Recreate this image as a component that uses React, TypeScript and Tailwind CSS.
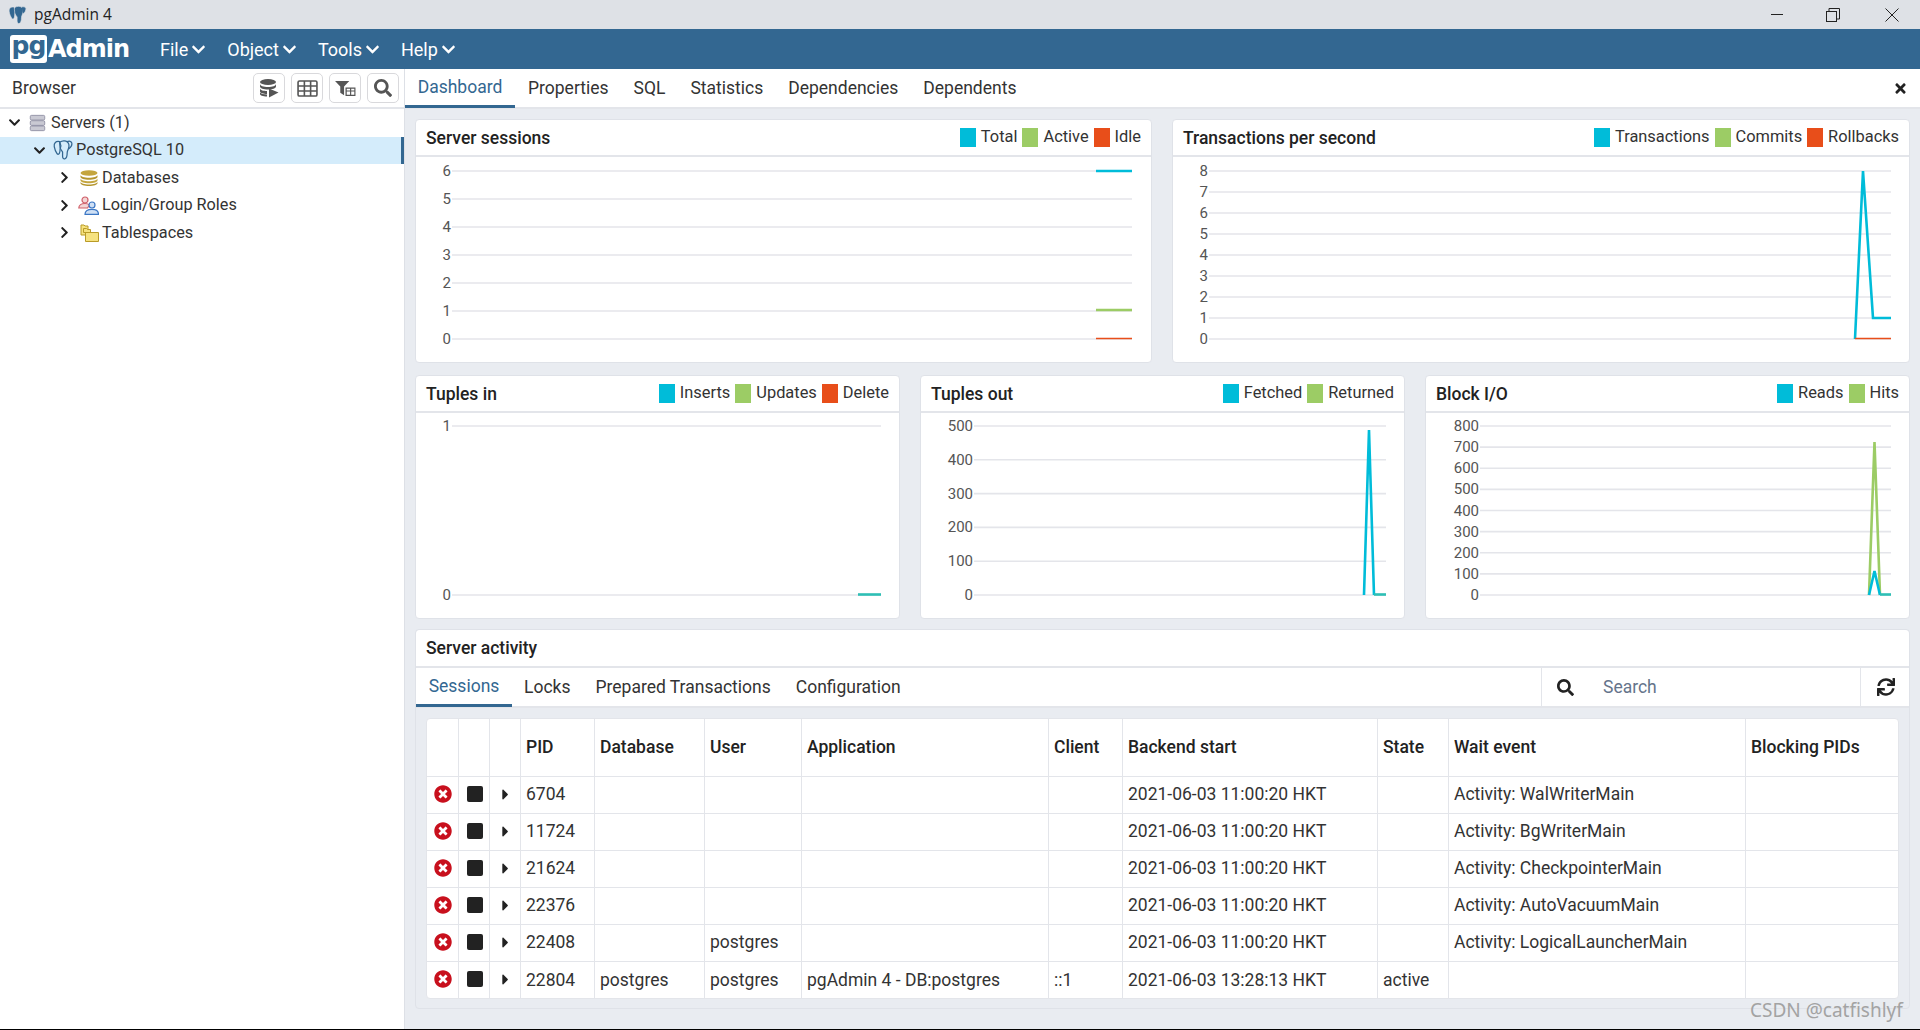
import React from "react";
import { FaCaretRight, FaChevronDown, FaChevronRight, FaSearch, FaSync, FaTimes, FaTimesCircle } from "react-icons/fa";

const CYAN = "#00bcd9";
const GREEN = "#9ccc65";
const ORANGE = "#e84e1a";

type Series = { color: string; points: string; thin?: boolean };

type ChartProps = {
  title: string;
  widthClass: string;
  legend: { label: string; color: string }[];
  labels: string[];
  top: number;
  bottom: number;
  x1: number;
  x2: number;
  labelX: number;
  series: Series[];
};

// chart values are px inside the card body
const Chart = ({ title, widthClass, legend, labels, top, bottom, x1, x2, labelX, series }: ChartProps) => {
  const step = labels.length > 1 ? (bottom - top) / (labels.length - 1) : 0;

  return (
    <div className={`${widthClass} h-[244px] bg-white rounded-[4px] border border-[#dfe2e8] flex flex-col`}>
      <div className="h-[37px] shrink-0 border-b-2 border-[#e3e5ea] flex items-center justify-between pl-[10px] pr-[10px]">
        <span className="text-[17.5px] font-medium text-[#222] pt-[1px]">{title}</span>
        <div className="flex items-center gap-[5px]">
          {legend.map((item) => (
            <div key={item.label} className="flex items-center gap-[5px]">
              <span className="w-[16px] h-[19px] inline-block" style={{ backgroundColor: item.color }} />
              <span className="text-[16.400px] text-[#333] font-normal">{item.label}</span>
            </div>
          ))}
        </div>
      </div>
      <svg className="flex-1 w-full block" fontFamily="Roboto, sans-serif">
        {labels.map((label, i) => {
          const y = top + step * i;
          return (
            <g key={label}>
              <line x1={x1} x2={x2} y1={y} y2={y} stroke="#e4e5ea" strokeWidth="1.6" />
              <text x={labelX} y={y + 5} fontSize="15" fill="#555" textAnchor="end">
                {label}
              </text>
            </g>
          );
        })}
        {series.map((s, i) => (
          <polyline key={i} points={s.points} fill="none" stroke={s.color} strokeWidth={s.thin ? "1.6" : "2.6"} />
        ))}
      </svg>
    </div>
  );
};

const Elephant = ({ className, color, filled }: { className: string; color: string; filled?: boolean }) => (
  <svg
    viewBox="0 0 24 24"
    className={className}
    fill={filled ? color : "none"}
    stroke={filled ? "#dee1e6" : color}
    strokeWidth={filled ? "0.8" : "1.5"}
    strokeLinejoin="round"
    strokeLinecap="round"
  >
    <path d="M8 2C3.500 1 .800 3.500 1.500 8c.5 3 2 6.500 3.500 8.500 1 1.200 2.200.6 2.800-1 .5-1.300.7-3 .7-4.500L9.500 7 8 2z" />
    <path d="M8.500 2.500c2.500-1.800 6.500-2 8.500-.5 2.200 1.700 2.500 5.500 1.500 8.500-.6 1.800-1.500 3-1.500 5 0 3-.5 6-2.500 7-2 .8-3-1-3-3v-5c-1-1.500-2.500-3-3-5.500-.3-2.500-.5-5-.5-6.500z" />
    <path d="M17 2c2.500-1 5-.5 5.500 1.500.5 2.500-1 5.500-3.500 7" />
  </svg>
);

const ServerStackIcon = () => (
  <svg viewBox="0 0 20 20" className="w-[17px] h-[20px] shrink-0">
    <rect x="1.500" y="1" width="17" height="5.500" rx="1.500" fill="#c9c9d3" stroke="#8b8ba0" />
    <rect x="1.500" y="7.300" width="17" height="5.500" rx="1.500" fill="#c9c9d3" stroke="#8b8ba0" />
    <rect x="1.500" y="13.500" width="17" height="5.500" rx="1.500" fill="#c9c9d3" stroke="#8b8ba0" />
  </svg>
);

const DatabasesIcon = () => (
  <svg viewBox="0 0 18 16" className="w-[18px] h-[16px] shrink-0">
    <ellipse cx="9" cy="3" rx="8.500" ry="2.800" fill="#c4a53e" />
    <path d="M.500 5c0 1.600 3.800 2.800 8.500 2.800s8.500-1.200 8.500-2.800v2c0 1.600-3.800 2.800-8.500 2.800S.500 8.600.500 7z" fill="#b5962f" />
    <path d="M.500 8.500c0 1.600 3.800 2.800 8.500 2.800s8.500-1.200 8.500-2.800v2c0 1.600-3.800 2.800-8.500 2.800S.500 12.100.500 10.500z" fill="#c4a53e" />
    <path d="M.500 11.800c0 1.600 3.800 2.800 8.500 2.800s8.500-1.200 8.500-2.800v1.400c0 1.600-3.800 2.800-8.500 2.800S.500 14.800.500 13.200z" fill="#b5962f" />
  </svg>
);

const RolesIcon = () => (
  <svg viewBox="0 0 21 19" className="w-[21px] h-[19px] shrink-0" fill="none" strokeWidth="1.200">
    <circle cx="7" cy="4" r="3" fill="#f3d5d5" stroke="#d0606a" />
    <path d="M.800 12c0-3 2.500-4.500 6.200-4.500 2 0 3.500.5 4.500 1.500l-2 3z" fill="#f3d5d5" stroke="#d0606a" />
    <circle cx="14" cy="9" r="3" fill="#cfe0f5" stroke="#3b76c4" />
    <path d="M7 18.300c0-3.500 3-5 7-5s6.500 1.500 6.500 5z" fill="#cfe0f5" stroke="#3b76c4" />
  </svg>
);

const TablespacesIcon = () => (
  <svg viewBox="0 0 19 19" className="w-[19px] h-[19px] shrink-0" strokeWidth="1" stroke="#b99b27">
    <path d="M1 2h3l1 1h3v9H1z" fill="#f6e27f" />
    <path d="M3.500 5.500h3l1 1h3v3h-7z" fill="#f6e27f" />
    <path d="M5.500 9.500h13v9h-13z" fill="#f6e27f" />
  </svg>
);

const ToolButton = ({ children }: { children: React.ReactNode }) => (
  <div className="w-[32px] h-[30px] rounded-[5px] border border-[#d9d9dc] flex items-center justify-center text-[#555]">{children}</div>
);

const TreeRow = ({
  pad,
  open,
  active,
  icon,
  label,
  gap,
  indent,
}: {
  pad: string;
  open: boolean;
  active?: boolean;
  icon: React.ReactNode;
  label: string;
  gap: string;
  indent: string;
}) => (
  <div className={`h-[27.500px] flex items-center ${pad} ${active ? "bg-[#d4ecfb] border-r-[3px] border-[#336791]" : ""}`}>
    <span className={`${indent} flex justify-start text-[#222] shrink-0`}>
      {open ? <FaChevronDown size={13} /> : <FaChevronRight size={13} />}
    </span>
    {icon}
    <span className={`${gap} text-[16.250px] text-[#333]`}>{label}</span>
  </div>
);

const sessions = [
  { pid: "6704", db: "", user: "", app: "", client: "", start: "2021-06-03 11:00:20 HKT", state: "", wait: "Activity: WalWriterMain" },
  { pid: "11724", db: "", user: "", app: "", client: "", start: "2021-06-03 11:00:20 HKT", state: "", wait: "Activity: BgWriterMain" },
  { pid: "21624", db: "", user: "", app: "", client: "", start: "2021-06-03 11:00:20 HKT", state: "", wait: "Activity: CheckpointerMain" },
  { pid: "22376", db: "", user: "", app: "", client: "", start: "2021-06-03 11:00:20 HKT", state: "", wait: "Activity: AutoVacuumMain" },
  { pid: "22408", db: "", user: "postgres", app: "", client: "", start: "2021-06-03 11:00:20 HKT", state: "", wait: "Activity: LogicalLauncherMain" },
  { pid: "22804", db: "postgres", user: "postgres", app: "pgAdmin 4 - DB:postgres", client: "::1", start: "2021-06-03 13:28:13 HKT", state: "active", wait: "" },
];

const headers = ["", "", "", "PID", "Database", "User", "Application", "Client", "Backend start", "State", "Wait event", "Blocking PIDs"];
const colWidths = ["w-[31px]", "w-[31px]", "w-[31px]", "w-[74px]", "w-[110px]", "w-[97px]", "w-[247px]", "w-[74px]", "w-[255px]", "w-[71px]", "w-[297px]", "w-[153px]"];

const App = () => {
  return (
    <div className="relative h-screen w-full flex flex-col overflow-hidden bg-white font-['Roboto',sans-serif] text-[#222]">
      {/* Title bar */}
      <div className="h-[29px] shrink-0 bg-[#dee1e6] flex items-center pl-[8px]">
        <Elephant className="w-[19px] h-[20px]" color="#336791" filled />
        <span className="ml-[7px] text-[15.500px] font-['Open_Sans',sans-serif] text-[#222]">pgAdmin 4</span>
        <div className="ml-auto flex items-center">
          <span className="w-[12px] h-[1px] bg-[#222] mr-[43px]" />
          <svg viewBox="0 0 14 14" className="w-[14px] h-[14px] mr-[45px]" fill="none" stroke="#222">
            <rect x="0.500" y="3.500" width="10" height="10" />
            <path d="M3 3V.500h10.500V11H11" />
          </svg>
          <svg viewBox="0 0 14 14" className="w-[14px] h-[14px] mr-[21px]" fill="none" stroke="#222">
            <path d="M.500.500l13 13M13.500.500l-13 13" />
          </svg>
        </div>
      </div>

      {/* Nav */}
      <div className="h-[40px] shrink-0 bg-[#336791] flex items-center pl-[10px]">
        <div className="flex items-center w-[150px]">
          <span className="w-[37px] h-[28px] rounded-[3px] bg-white text-[#336791] font-['DejaVu_Sans',sans-serif] font-bold text-[25px] leading-[22px] tracking-[-1px] flex justify-center">
            pg
          </span>
          <span className="ml-[1px] text-white font-['DejaVu_Sans',sans-serif] font-bold text-[24px] tracking-[-1px] leading-none">Admin</span>
        </div>
        {["File", "Object", "Tools", "Help"].map((m) => (
          <div key={m} className="flex items-center text-white text-[18px] mr-[21px] gap-[3px]">
            {m}
            <FaChevronDown size={15} />
          </div>
        ))}
      </div>

      {/* Main */}
      <div className="flex-1 flex min-h-0 border-b border-black">
        {/* Browser */}
        <aside className="w-[405px] shrink-0 border-r border-[#dde0e6] flex flex-col">
          <div className="h-[40px] shrink-0 border-b-2 border-[#e3e5ea] flex items-center justify-between pl-[12px] pr-[5px]">
            <span className="text-[17.500px] text-[#333]">Browser</span>
            <div className="flex items-center gap-[6px]">
              <ToolButton>
                <svg viewBox="0 0 20 20" className="w-[20px] h-[20px]" fill="#555">
                  <ellipse cx="9" cy="4" rx="8" ry="3" />
                  <path d="M1 6c0 1.700 3.600 3 8 3s8-1.300 8-3v2.500c0 1.700-3.600 3-8 3s-8-1.300-8-3z" />
                  <path d="M1 10.500c0 1.700 3.600 2.500 7 2.500v3c-3.500 0-7-1-7-2.500z" />
                  <path d="M1 14.500c1 1 3.500 2 7 2v2c-4 0-7-1-7-2.500z" />
                  <path d="M10 10.500l9.500 4-9.500 5z" />
                </svg>
              </ToolButton>
              <ToolButton>
                <svg viewBox="0 0 22 18" className="w-[21px] h-[17px]" fill="none" stroke="#555" strokeWidth="1.700">
                  <rect x="1" y="1" width="20" height="16" rx="1.500" />
                  <path d="M1 6.300h20M1 11.700h20M7.700 1v16M14.300 1v16" />
                </svg>
              </ToolButton>
              <ToolButton>
                <svg viewBox="0 0 22 20" className="w-[21px] h-[19px]" fill="#555">
                  <path d="M0 2h15l-5.500 6v9l-4-2.500V8z" />
                  <path d="M11 9h10.500v9H11zM12.300 10.300v1.700h3.500v-1.700zM17 10.300v1.700h3.300v-1.700zM12.300 13.200v3.500h3.500v-3.500zM17 13.200v3.500h3.300v-3.500z" fillRule="evenodd" />
                </svg>
              </ToolButton>
              <ToolButton>
                <FaSearch size={18} />
              </ToolButton>
            </div>
          </div>
          <div>
            <TreeRow pad="pl-[8px]" indent="w-[21px]" open icon={<ServerStackIcon />} gap="ml-[5px]" label="Servers (1)" />
            <TreeRow pad="pl-[33px]" indent="w-[20px]" open active icon={<Elephant className="w-[20px] h-[20px] shrink-0" color="#336791" />} gap="ml-[3px]" label="PostgreSQL 10" />
            <TreeRow pad="pl-[58px]" indent="w-[22px]" open={false} icon={<DatabasesIcon />} gap="ml-[4px]" label="Databases" />
            <TreeRow pad="pl-[58px]" indent="w-[20px]" open={false} icon={<RolesIcon />} gap="ml-[3px]" label="Login/Group Roles" />
            <TreeRow pad="pl-[58px]" indent="w-[22px]" open={false} icon={<TablespacesIcon />} gap="ml-[3px]" label="Tablespaces" />
          </div>
        </aside>

        {/* Right side */}
        <div className="flex-1 min-w-0 flex flex-col bg-[#e9ecf1]">
          <div className="h-[40px] shrink-0 bg-white border-b-2 border-[#e3e5ea] flex items-stretch text-[17.500px] text-[#333] relative">
            <div className="w-[110px] flex items-center justify-center text-[#336791] border-b-[3px] border-[#336791] h-[39px]">Dashboard</div>
            <div className="flex items-center gap-[25px] h-[38px] pl-[13px]">
              <span>Properties</span>
              <span>SQL</span>
              <span>Statistics</span>
              <span>Dependencies</span>
              <span>Dependents</span>
            </div>
            <FaTimes size={15} className="absolute right-[12px] top-[12px] text-[#222]" />
          </div>

          <div className="pl-[10px] pr-[10px] pt-[10px] flex flex-col">
            <div className="flex justify-between">
              <Chart
                title="Server sessions"
                widthClass="w-[737px]"
                legend={[
                  { label: "Total", color: CYAN },
                  { label: "Active", color: GREEN },
                  { label: "Idle", color: ORANGE },
                ]}
                labels={["6", "5", "4", "3", "2", "1", "0"]}
                top={14}
                bottom={182}
                x1={36}
                x2={716}
                labelX={35}
                series={[
                  { color: ORANGE, points: "680,181.500 716,181.500", thin: true },
                  { color: GREEN, points: "680,153 716,153" },
                  { color: CYAN, points: "680,14 716,14" },
                ]}
              />
              <Chart
                title="Transactions per second"
                widthClass="w-[738px]"
                legend={[
                  { label: "Transactions", color: CYAN },
                  { label: "Commits", color: GREEN },
                  { label: "Rollbacks", color: ORANGE },
                ]}
                labels={["8", "7", "6", "5", "4", "3", "2", "1", "0"]}
                top={14}
                bottom={182}
                x1={36}
                x2={718}
                labelX={35}
                series={[
                  { color: CYAN, points: "682,182 690,14 700,161 718,161" },
                  { color: ORANGE, points: "682,181.500 718,181.500", thin: true },
                ]}
              />
            </div>

            <div className="flex justify-between mt-[12px]">
              <Chart
                title="Tuples in"
                widthClass="w-[485px]"
                legend={[
                  { label: "Inserts", color: CYAN },
                  { label: "Updates", color: GREEN },
                  { label: "Delete", color: ORANGE },
                ]}
                labels={["1", "0"]}
                top={13}
                bottom={182}
                x1={36}
                x2={465}
                labelX={35}
                series={[{ color: "#2dbfb5", points: "442,181.500 465,181.500" }]}
              />
              <Chart
                title="Tuples out"
                widthClass="w-[485px]"
                legend={[
                  { label: "Fetched", color: CYAN },
                  { label: "Returned", color: GREEN },
                ]}
                labels={["500", "400", "300", "200", "100", "0"]}
                top={13}
                bottom={182}
                x1={53}
                x2={465}
                labelX={52}
                series={[
                  { color: CYAN, points: "443,182 448,17 453,182" },
                  { color: "#2dbfb5", points: "453,181.500 465,181.500" },
                ]}
              />
              <Chart
                title="Block I/O"
                widthClass="w-[485px]"
                legend={[
                  { label: "Reads", color: CYAN },
                  { label: "Hits", color: GREEN },
                ]}
                labels={["800", "700", "600", "500", "400", "300", "200", "100", "0"]}
                top={13}
                bottom={182}
                x1={54}
                x2={465}
                labelX={53}
                series={[
                  { color: GREEN, points: "443,182 448.500,29 454,182" },
                  { color: CYAN, points: "443,182 448.500,158 454,182" },
                  { color: "#2dbfb5", points: "454,181.500 465,181.500" },
                ]}
              />
            </div>

            {/* Server activity */}
            <div className="mt-[10px] h-[380px] rounded-[4px] border border-[#dfe2e8] bg-[#e9ecf1] flex flex-col">
              <div className="h-[38px] shrink-0 bg-white rounded-t-[4px] border-b-2 border-[#e3e5ea] flex items-center pl-[10px] text-[17.500px] font-medium pt-[1px]">Server activity</div>
              <div className="h-[40px] shrink-0 bg-white border-b-2 border-[#e3e5ea] flex items-stretch text-[17.500px] text-[#333]">
                <div className="w-[96px] h-[39px] flex items-center justify-center text-[#336791] border-b-[3px] border-[#336791]">Sessions</div>
                <div className="flex items-center gap-[25px] ml-[12px]">
                  <span>Locks</span>
                  <span>Prepared Transactions</span>
                  <span>Configuration</span>
                </div>
                <div className="ml-auto w-[319px] border-l border-[#e3e5ea] flex items-center pl-[15px] h-[38px]">
                  <FaSearch size={17} className="text-[#222]" />
                  <span className="ml-[29px] text-[#65748b] text-[17.500px] pt-[1px]">Search</span>
                </div>
                <div className="w-[49px] border-l border-[#e3e5ea] flex items-center justify-center pl-[1px] h-[38px]">
                  <FaSync size={18} className="text-[#222]" />
                </div>
              </div>

              <div className="mx-[10px] mt-[10px] bg-white rounded-[4px] border border-[#e3e5ea]">
                <table className="w-full table-fixed border-collapse text-[17.500px] text-[#333]">
                  <colgroup>
                    {colWidths.map((w, i) => (
                      <col key={i} className={w} />
                    ))}
                  </colgroup>
                  <thead>
                    <tr className="h-[57px]">
                      {headers.map((h, i) => (
                        <th key={i} className="border-l first:border-l-0 border-[#e3e5ea] text-left font-medium text-[#222] pl-[5.500px] align-middle">
                          {h}
                        </th>
                      ))}
                    </tr>
                  </thead>
                  <tbody>
                    {sessions.map((s) => (
                      <tr key={s.pid} className="h-[37px] border-t border-[#e3e5ea]">
                        <td className="pl-[7px]">
                          <FaTimesCircle size={18} className="text-[#c8101d] -mt-[1px]" />
                        </td>
                        <td className="border-l border-[#e3e5ea] pl-[8px]">
                          <span className="block w-[16px] h-[16px] rounded-[2px] bg-[#222] -mt-[1px]" />
                        </td>
                        <td className="border-l border-[#e3e5ea] pl-[7px]">
                          <FaCaretRight size={17} className="text-[#222] -mt-[1px]" />
                        </td>
                        {[s.pid, s.db, s.user, s.app, s.client, s.start, s.state, s.wait, ""].map((v, i) => (
                          <td key={i} className="border-l border-[#e3e5ea] pl-[5.500px]">
                            {v}
                          </td>
                        ))}
                      </tr>
                    ))}
                  </tbody>
                </table>
              </div>
            </div>
          </div>
        </div>
      </div>

      <span className="absolute left-[1750px] top-[996px] text-[19px] font-['Noto_Sans',sans-serif] text-[#a3a3a3]">CSDN @catfishlyf</span>
    </div>
  );
};

export default App;
